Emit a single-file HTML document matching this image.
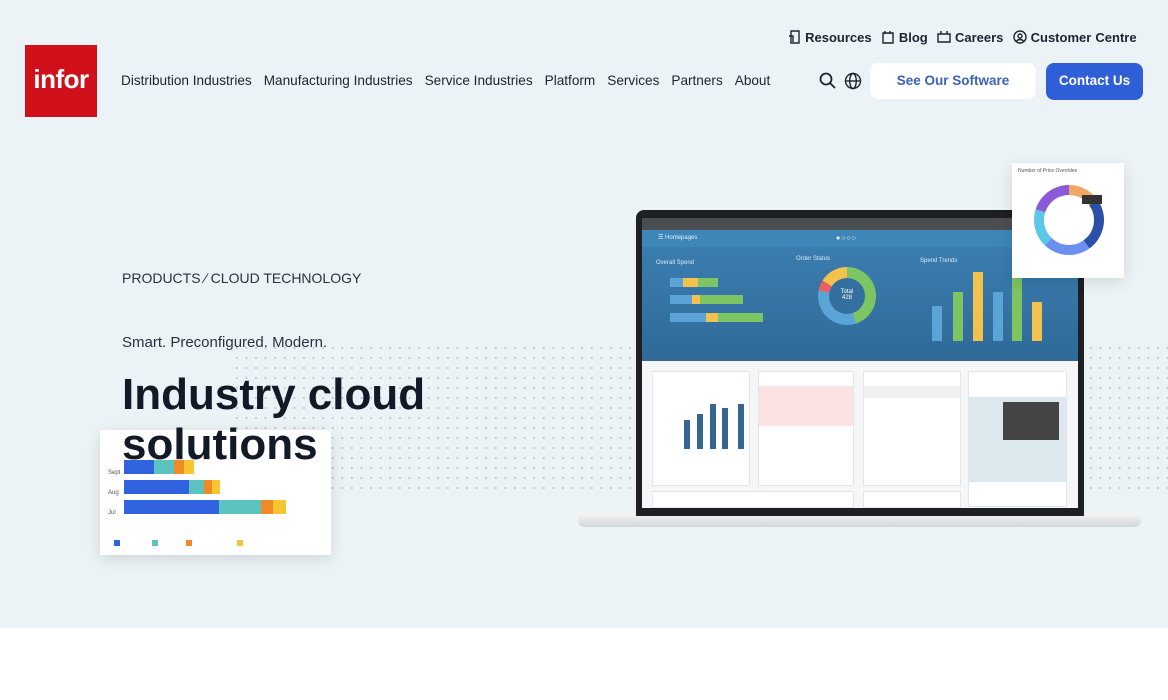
<!DOCTYPE html>
<html><head><meta charset="utf-8"><style>
*{margin:0;padding:0;box-sizing:border-box}
body{width:1168px;height:700px;overflow:hidden;background:#fff;font-family:"Liberation Sans",sans-serif;position:relative}
.hero{position:absolute;left:0;top:0;width:1168px;height:628px;background:#ebf3f6}
.abs{position:absolute}
.logo{left:25px;top:45px;width:72px;height:72px;background:#d0111b;color:#fff;font-weight:bold;font-size:26px;text-align:center;line-height:68px;letter-spacing:-0.5px}
.nav{top:73px;left:121px;font-size:13.6px;color:#1c2430;white-space:nowrap}
.nav span{margin-right:12px}
.util{top:30px;left:788px;font-size:13px;font-weight:bold;color:#1c2430;white-space:nowrap;word-spacing:0.5px}
.util i{display:inline-block;width:5px}
.btn{top:63px;height:36px;border-radius:8px;font-size:13.5px;font-weight:bold;text-align:center;line-height:36px}
.dots{background-image:radial-gradient(circle,#b9c9d3 0.9px,transparent 1.2px);background-size:9.6px 10px}
.card{background:#fff;box-shadow:0 4px 14px rgba(0,0,0,.12)}
</style></head><body>
<div class="hero"></div>
<div class="abs dots" style="left:232px;top:343px;width:400px;height:147px"></div>
<div class="abs dots" style="left:1086px;top:343px;width:82px;height:147px"></div>

<div class="abs logo">infor</div>
<div class="abs nav"><span>Distribution Industries</span><span>Manufacturing Industries</span><span>Service Industries</span><span>Platform</span><span>Services</span><span>Partners</span><span>About</span></div>
<div class="abs util">
<svg width="13" height="14" viewBox="0 0 13 14" style="vertical-align:-2px"><path d="M3 1h8v12H3zM1 6h4v6" fill="none" stroke="#1c2430" stroke-width="1.4"/></svg> Resources<i></i>
<svg width="14" height="14" viewBox="0 0 14 14" style="vertical-align:-2px"><path d="M2 3h10v10H2zM4 1v3M9 1v3" fill="none" stroke="#1c2430" stroke-width="1.4"/></svg> Blog<i></i>
<svg width="14" height="14" viewBox="0 0 14 14" style="vertical-align:-2px"><path d="M1 4h12v8H1zM4 1v3M10 1v3" fill="none" stroke="#1c2430" stroke-width="1.4"/></svg> Careers<i></i>
<svg width="14" height="14" viewBox="0 0 14 14" style="vertical-align:-2px"><circle cx="7" cy="7" r="6" fill="none" stroke="#1c2430" stroke-width="1.4"/><circle cx="7" cy="6" r="2" fill="none" stroke="#1c2430" stroke-width="1.4"/><path d="M3.5 11c2-2 5-2 7 0" fill="none" stroke="#1c2430" stroke-width="1.4"/></svg> Customer Centre</div>
<svg class="abs" style="left:819px;top:72px" width="18" height="18" viewBox="0 0 18 18"><circle cx="7" cy="7" r="5.5" fill="none" stroke="#1c2430" stroke-width="1.8"/><path d="M11 11l5 5" stroke="#1c2430" stroke-width="1.8"/></svg>
<svg class="abs" style="left:844px;top:72px" width="18" height="18" viewBox="0 0 18 18"><circle cx="9" cy="9" r="7.5" fill="none" stroke="#1c2430" stroke-width="1.4"/><ellipse cx="9" cy="9" rx="3.3" ry="7.5" fill="none" stroke="#1c2430" stroke-width="1.4"/><path d="M1.5 9h15" stroke="#1c2430" stroke-width="1.4"/></svg>
<div class="abs btn" style="left:870px;width:166px;background:#fff;color:#3b62b4">See Our Software</div>
<div class="abs btn" style="left:1046px;width:97px;background:#2f5fd6;color:#fff;height:37px">Contact Us</div>

<div class="abs" style="left:122px;top:270px;font-size:14px;color:#2a323c">PRODUCTS ⁄ CLOUD TECHNOLOGY</div>
<div class="abs" style="left:122px;top:334px;font-size:15px;color:#2a323c">Smart. Preconfigured. Modern.</div>

<div class="abs card" style="left:100px;top:430px;width:231px;height:125px">
 <div class="abs" style="left:24px;top:30px;width:150px;height:14px;background:linear-gradient(90deg,#2f63e0 0 30px,#5bc4c0 30px 50px,#f08a24 50px 60px,#f6c530 60px 70px,transparent 70px)"></div>
 <div class="abs" style="left:24px;top:50px;width:150px;height:14px;background:linear-gradient(90deg,#2f63e0 0 65px,#5bc4c0 65px 80px,#f08a24 80px 88px,#f6c530 88px 96px,transparent 96px)"></div>
 <div class="abs" style="left:24px;top:70px;width:170px;height:14px;background:linear-gradient(90deg,#2f63e0 0 95px,#5bc4c0 95px 137px,#f08a24 137px 149px,#f6c530 149px 162px,transparent 162px)"></div>
 <div class="abs" style="left:8px;top:33px;font-size:6px;color:#555;line-height:20px">Sept<br>Aug<br>Jul</div>
 <div class="abs" style="left:14px;top:110px;width:190px;height:6px;background:linear-gradient(90deg,#2f63e0 0 6px,transparent 6px 38px,#5bc4c0 38px 44px,transparent 44px 72px,#f08a24 72px 78px,transparent 78px 123px,#f6c530 123px 129px,transparent 129px)"></div>
</div>
<div class="abs" style="left:122px;top:370px;font-size:44px;font-weight:bold;color:#111a26;line-height:50px">Industry cloud<br>solutions</div>

<div class="abs" style="left:578px;top:513px;width:563px;height:14px;background:linear-gradient(#f5f5f5,#d2d6d9);border-radius:0 0 6px 6px"></div>
<div class="abs" style="left:636px;top:210px;width:448px;height:306px;background:#1e1f22;border-radius:8px 8px 0 0"></div>
<div class="abs" style="left:642px;top:218px;width:436px;height:12px;background:#4a4d52"></div>
<div class="abs" style="left:642px;top:230px;width:436px;height:17px;background:#3d86b8"></div>
<div class="abs" style="left:642px;top:247px;width:436px;height:114px;background:linear-gradient(#3b7db0,#2f6a98)"></div>
<div class="abs" style="left:642px;top:361px;width:436px;height:147px;background:#f4f6f7"></div>
<div class="abs" style="left:658px;top:234px;font-size:6px;color:#e6f0f8">☰ Homepages</div>
<div class="abs" style="left:836px;top:235px;font-size:7px;color:#fff;letter-spacing:1px">●○○○</div>
<div class="abs" style="left:656px;top:260px;font-size:6px;color:#dfe9f2">Overall Spend</div>
<div class="abs" style="left:796px;top:256px;font-size:6px;color:#dfe9f2">Order Status</div>
<div class="abs" style="left:920px;top:258px;font-size:6px;color:#dfe9f2">Spend Trends</div>
<div class="abs" style="left:670px;top:278px;width:48px;height:9px;background:linear-gradient(90deg,#5ba4d8 0 13px,#f2c14e 13px 28px,#7dc462 28px)"></div>
<div class="abs" style="left:670px;top:295px;width:73px;height:9px;background:linear-gradient(90deg,#5ba4d8 0 22px,#f2c14e 22px 30px,#7dc462 30px)"></div>
<div class="abs" style="left:670px;top:313px;width:93px;height:9px;background:linear-gradient(90deg,#5ba4d8 0 36px,#f2c14e 36px 48px,#7dc462 48px)"></div>
<div class="abs" style="left:818px;top:267px;width:58px;height:58px;border-radius:50%;background:conic-gradient(#7dc462 0 45%,#5ba4d8 45% 78%,#e86060 78% 84%,#f2c14e 84%)"></div>
<div class="abs" style="left:829px;top:278px;width:36px;height:36px;border-radius:50%;background:#33709f;color:#fff;font-size:6px;text-align:center;padding-top:11px">Total<br>428</div>
<div class="abs" style="left:932px;top:306px;width:10px;height:35px;background:#5ba4d8"></div>
<div class="abs" style="left:953px;top:292px;width:10px;height:49px;background:#7dc462"></div>
<div class="abs" style="left:973px;top:272px;width:10px;height:69px;background:#f2c14e"></div>
<div class="abs" style="left:993px;top:292px;width:10px;height:49px;background:#5ba4d8"></div>
<div class="abs" style="left:1012px;top:274px;width:10px;height:67px;background:#7dc462"></div>
<div class="abs" style="left:1032px;top:302px;width:10px;height:39px;background:#f2c14e"></div>
<div class="abs" style="left:652px;top:371px;width:98px;height:115px;background:#fff;border:1px solid #e3e6e8"></div>
<div class="abs" style="left:758px;top:371px;width:96px;height:115px;background:#fff;border:1px solid #e3e6e8"></div>
<div class="abs" style="left:759px;top:386px;width:94px;height:40px;background:#fbe3e3"></div>
<div class="abs" style="left:863px;top:371px;width:98px;height:115px;background:#fff;border:1px solid #e3e6e8"></div>
<div class="abs" style="left:864px;top:386px;width:96px;height:12px;background:#eef0f2"></div>
<div class="abs" style="left:968px;top:371px;width:99px;height:136px;background:#fff;border:1px solid #e3e6e8"></div>
<div class="abs" style="left:969px;top:397px;width:97px;height:85px;background:#dce8ee"></div>
<div class="abs" style="left:1003px;top:402px;width:56px;height:38px;background:#444"></div>
<div class="abs" style="left:652px;top:491px;width:202px;height:17px;background:#fff;border:1px solid #e3e6e8"></div>
<div class="abs" style="left:863px;top:491px;width:98px;height:17px;background:#fff;border:1px solid #e3e6e8"></div>
<div class="abs" style="left:684px;top:420px;width:6px;height:29px;background:#36668f"></div>
<div class="abs" style="left:697px;top:414px;width:6px;height:35px;background:#36668f"></div>
<div class="abs" style="left:710px;top:404px;width:6px;height:45px;background:#36668f"></div>
<div class="abs" style="left:722px;top:408px;width:6px;height:41px;background:#36668f"></div>
<div class="abs" style="left:738px;top:404px;width:6px;height:45px;background:#36668f"></div>
<div class="abs card" style="left:1012px;top:163px;width:112px;height:115px">
 <div class="abs" style="left:6px;top:5px;font-size:5px;color:#555">Number of Price Overrides</div>
 <div class="abs" style="left:22px;top:22px;width:70px;height:70px;border-radius:50%;background:conic-gradient(#f2a668 0 15%,#2c4fa8 15% 40%,#6b8ff0 40% 62%,#5ec6e8 62% 80%,#8a5ad8 80%)"></div>
 <div class="abs" style="left:32px;top:32px;width:50px;height:50px;border-radius:50%;background:#fff"></div>
 <div class="abs" style="left:70px;top:32px;width:20px;height:9px;background:#333"></div>
</div>
<div class="abs" style="left:0;top:628px;width:1168px;height:72px;background:#fff"></div>
</body></html>
